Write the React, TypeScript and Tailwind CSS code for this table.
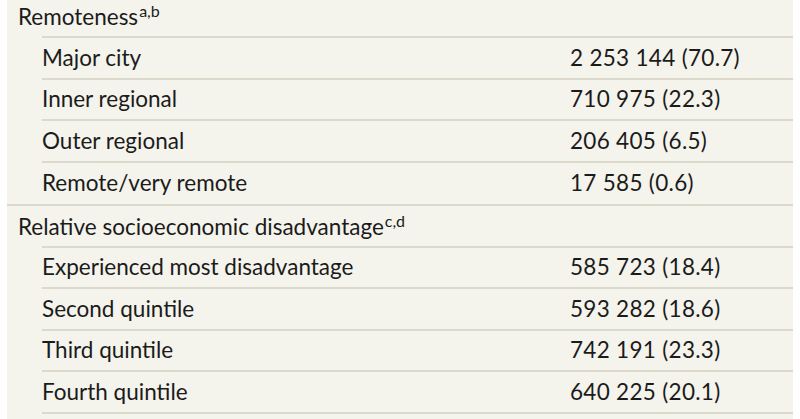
const font = { fontFamily: 'Lato, "Noto Sans", sans-serif' };

type Item = { label: string; value: string };

interface Group {
  title: string;
  notes: string;
  items: Item[];
}

const groups: Group[] = [
  {
    title: 'Remoteness',
    notes: 'a,b',
    items: [
      { label: 'Major city', value: '2 253 144 (70.7)' },
      { label: 'Inner regional', value: '710 975 (22.3)' },
      { label: 'Outer regional', value: '206 405 (6.5)' },
      { label: 'Remote/very remote', value: '17 585 (0.6)' },
    ],
  },
  {
    title: 'Relative socioeconomic disadvantage',
    notes: 'c,d',
    items: [
      { label: 'Experienced most disadvantage', value: '585 723 (18.4)' },
      { label: 'Second quintile', value: '593 282 (18.6)' },
      { label: 'Third quintile', value: '742 191 (23.3)' },
      { label: 'Fourth quintile', value: '640 225 (20.1)' },
    ],
  },
];

function ItemRow({ item, groupEnd }: { item: Item; groupEnd: boolean }) {
  return (
    <div className={groupEnd ? 'border-b-2 border-[#ddd8cc]' : ''}>
      <div
        className={`ml-[35px] h-[41.5px] grid grid-cols-[528px_1fr] items-center ${
          groupEnd ? '' : 'border-b-2 border-[#ddd8cc]'
        }`}
      >
        <span>{item.label}</span>
        <span className="tracking-[0.3px]">{item.value}</span>
      </div>
    </div>
  );
}

export default function App() {
  return (
    <div className="h-[419px] overflow-hidden bg-white px-[7px] text-[22.5px] leading-none text-[#1b1b1b]" style={font}>
      <div className="bg-[#f4f3ec] -mt-[3.5px] pb-[20px]">
        {groups.map((group, g) => (
          <div key={group.title}>
            <div className="h-[41.5px] flex items-center pl-[11px]">
              <span>
                {group.title}
                <sup className="text-[16px] top-[-0.5em] ml-[1px]">{group.notes}</sup>
              </span>
            </div>
            <div className="border-t-2 border-[#ddd8cc] ml-[35px] -mt-[2px]" />
            {group.items.map((item, i) => (
              <ItemRow
                key={item.label}
                item={item}
                groupEnd={g === 0 && i === group.items.length - 1}
              />
            ))}
          </div>
        ))}
      </div>
    </div>
  );
}
